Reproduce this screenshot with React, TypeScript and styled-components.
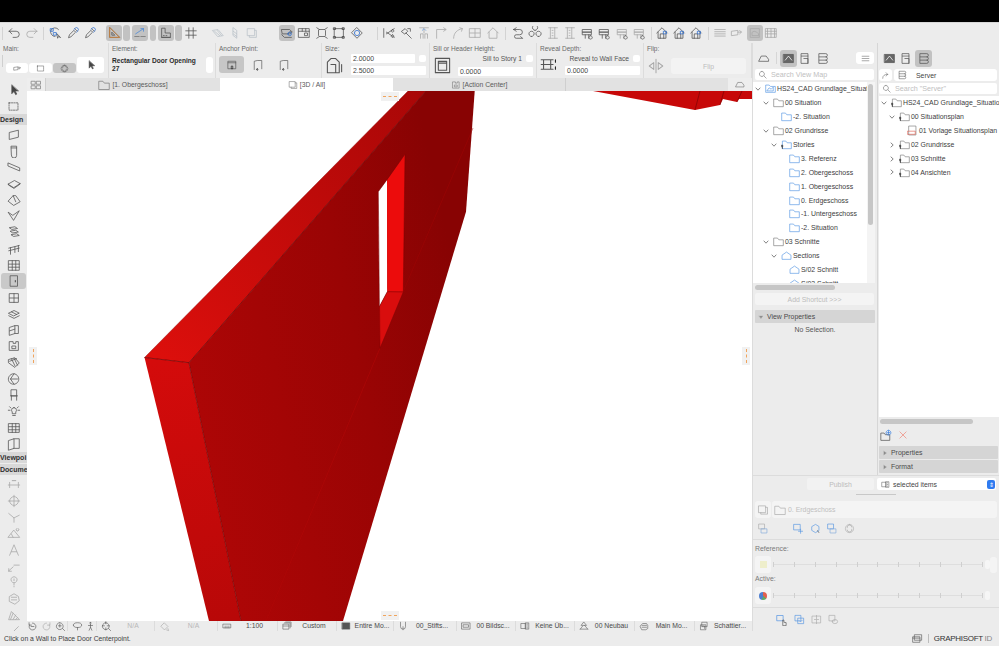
import * as React from "react";
import styled, { createGlobalStyle } from "styled-components";

const GlobalStyle = createGlobalStyle`
  html, body { margin: 0; padding: 0; background: #ececec; }
  body { font-family: "Liberation Sans", Arial, sans-serif; color: #3a3a3a; }
  * { box-sizing: border-box; }
`;

type GlyphDef = { d: string; fill?: string; accent?: string; accentColor?: string; dash?: boolean };

const GLYPHS: Record<string, GlyphDef> = {
  undo: { d: "M2.5 6h8a3.5 3.5 0 0 1 0 7H7M2.5 6l3-3M2.5 6l3 3" },
  redo: { d: "M13.5 6h-8a3.5 3.5 0 0 0 0 7H9M13.5 6l-3-3M13.5 6l-3 3" },
  favorite: { d: "M10 9l1 5 1-2 2 1zM8 12a5 5 0 1 1 4-8", accent: "M3 3h3v3H3zM6.5 7.5h3v3h-3z", accentColor: "#2f6fd0" },
  dropper: { d: "M10 3l3 3M3 13l1-3 5-5 2 2-5 5z", accent: "M9 4l1.5-1.5a1.5 1.5 0 0 1 3 3L12 7", accentColor: "#2f6fd0" },
  ruler: { d: "M3 2v11h11zM5.5 7.5v3h3z", accent: "M3 2v11h11z", accentColor: "#d98536" },
  guide: { d: "M2 12h5M9 12h5", accent: "M3 9l9-6M9 3l3 0 0 3", accentColor: "#4c8ad8" },
  snap: { d: "M3 3v10h10v-5H7V3zM5 11h1M8 11h1", accent: "M3 13h10", accentColor: "#555" },
  hash: { d: "M5.5 2v12M10.5 2v12M2 5.5h12M2 10.5h12" },
  plane: { d: "M2 5l6-1 6 7-6 1z M4 6l6 5M7 5l5 6" },
  sliver: { d: "M6 2l4 3v9l-4-3zM6 6l4 3M6 9l4 3" },
  square: { d: "M3 3h8v8H3zM5 11v2h8V5h-2" },
  layers: { d: "M2 4h9l3 3-3 2H3zM2 10l3 3h8M9 9l3-3", accent: "M9 9a2 2 0 1 1 4 0a2 2 0 1 1-4 0", accentColor: "#2f6fd0" },
  scale: { d: "M2 3h12v10H2zM2 6h12M6 3v3M10 3v3M9 8h3v3H9z" },
  focus: { d: "M5 4h6l1 1v6l-1 1H5l-1-1V5zM2 2l3 2M14 2l-3 2M2 14l3-2M14 14l-3-2" },
  points: { d: "M3 3h10v10H3z", accent: "M2 2h2v2H2zM12 2h2v2h-2zM2 12h2v2H2zM12 12h2v2h-2z", accentColor: "#444" },
  diamond: { d: "M8 2l6 6-6 6-6-6z", accent: "M5 8a3 3 0 1 0 6 0a3 3 0 1 0-6 0", accentColor: "#2f6fd0" },
  scissors: { d: "M2 3v10M14 3L5 9M14 13L5 7M12 4a1.5 1.5 0 1 0 .1 0M12 10a1.5 1.5 0 1 0 .1 0" },
  hammer: { d: "M3 6l4-3 3 3-3 3zM8 8l6 6M10 3h3v3" },
  extend: { d: "M3 2h10M8 3v5M4 14V9h3v5M9 14V9h3v5", accent: "M6 5l2-2 2 2", accentColor: "#6b9ddb" },
  corner: { d: "M3 14V4h10M11 2l3 2-3 2" },
  arc: { d: "M3 14C3 8 7 4 13 3M10 2l3 1-1 3" },
  grid2: { d: "M2 3h12v10H2zM8 3v10M2 8h12" },
  house: { d: "M2 8l6-6 6 6M3.5 7v7h9V7" },
  merge: { d: "M3 4h7a3 3 0 0 1 0 6H6a2 2 0 0 0 0 4h7M3 4l3-2M3 4l3 2M13 14l-2-2" },
  cluster: { d: "M8 5a3 3 0 1 1 .1 0M4 12a3 3 0 1 1 .1 0M12 12a3 3 0 1 1 .1 0" },
  column2: { d: "M3 2h10M3 14h10M5 2v12M10 2v12M7 5h1M7 8h1M7 11h1" },
  stackA: { d: "M3 4h10v3H3zM3 7h10v3H3zM6 10v4M10 10v4", accent: "M12 11a2 2 0 1 0 .1 0", accentColor: "#555" },
  houseA: { d: "M2 8l6-6 6 6M3.5 7v7h9V7M6 14V9h4v5", accent: "M10 6h3v3h-3z", accentColor: "#2f6fd0" },
  hatchA: { d: "M2 4h12M2 6.5h12M2 9h12M2 11.5h12" },
  hatchB: { d: "M2 6l7-1 0 5-7 1zM9 7h4M11 5l2 2-2 2" },
  hatchC: { d: "M3 3h10v10H3zM5 7l2-1 3 1 2 2v2H5z" },
  hatchD: { d: "M2 3h12v10H2zM2 6h12M2 9h12M4 3v10M8 3v10M12 3v10" },
  arrow: { d: "M5 1.5v11.5l3-3 2.2 4.2 1.6-.8-2.2-4 4-.2z", fill: "#444" },
  marquee: { d: "M2.5 3.5h11v9h-11z", dash: true },
  wall: { d: "M3 5l10-2.5v8L3 13z" },
  columnT: { d: "M5 2.5h6V13a3 3 0 0 1-6 0zM5 4.5h6" },
  beam: { d: "M1.5 3.5L14.5 9v3.5L1.5 7z" },
  slab: { d: "M1.5 8l7-4 6.5 3.5-7 4.5zM1.5 8v1l6.5 4 7-5V7.5" },
  roof: { d: "M1.5 9L7 3l3 0 5 7-7 4zM7 3l3 7" },
  shell: { d: "M1.5 4l6 9 6.5-11-7 5z" },
  stair: { d: "M3 3l6-1 3 2-6 1zM4 7l6-1 3 2-6 1zM5 11l6-1 3 2-6 1z" },
  railing: { d: "M2 7l12-3M2 10l12-3M4 6.5V14M9 5.5V12M13 4v7" },
  curtain: { d: "M2 3h12v11H2zM2 7h12M2 10.5h12M6 3v11M10 3v11" },
  door: { d: "M4 2h8v12H4z", accent: "M9.5 7.5v1.5", accentColor: "#222" },
  windowT: { d: "M3 3h10v10H3zM3 8h10M8 3v10" },
  skylight: { d: "M2 7l6-3 6 3-6 3zM2 10l6 3 6-3M5 5.5l6 3" },
  corner2: { d: "M3 5l6-2v9l-6 2zM9 3h4v9H9M3 9l6-2" },
  zone: { d: "M3 3h4v2h3V3h3v10H3zM6 8h4v3H6z" },
  mesh: { d: "M2 4l7-2 5 6-5 5-7-5zM5 3l4 8M8 2.5l4 8M3 6l8-3" },
  morph: { d: "M8 2a6 6 0 1 1-1 0zM8 2L4 8l4 6M4 8h8" },
  chair: { d: "M5 2h6v7H5zM4 9h8M5 9v5M11 9v5" },
  lamp: { d: "M8 3a3 3 0 0 1 2 5v2H6V8a3 3 0 0 1 2-5zM6.5 12h3M1.5 6h2M12.5 6h2M3 2l1.5 1.5M13 2l-1.5 1.5" },
  gridSolid: { d: "M2 3h12v10H2zM2 6.5h12M2 10h12M6 3v10M10 3v10" },
  tileGrid: { d: "M2 3h5v4H2zM9 3h5v4H9zM2 9h5v4H2zM9 9h5v4H9z" },
  bookOpen: { d: "M2 4l6-2v11l-6 2zM8 2h6v11H8" },
  dimLinear: { d: "M1.5 8h13M3 5v6M13 5v6", accent: "M6 3h4", accentColor: "#999" },
  dimTarget: { d: "M3 8a5 5 0 1 0 10 0a5 5 0 1 0-10 0M1.5 8h13M8 1.5v13" },
  dimCorner: { d: "M2 4l6 5v5M8 9l6-3" },
  angle: { d: "M1.5 13h13L8 5zM5 9l2 4", accent: "M11 3a1.5 1.5 0 1 0 2 0", accentColor: "#999" },
  letter: { d: "M3 14L8 2l5 12M5 10h6" },
  label: { d: "M1.5 14L7 9M2 11v3h3M8 7h6" },
  pin: { d: "M8 9a3.5 3.5 0 1 1 .1 0M8 4.5v2M8 10v1M8 12.5v1" },
  blob: { d: "M3 5l5-3 5 3 1 5-5 4-6-3zM5 6h6M5 9h6" },
  hatchT: { d: "M2 13l3-9 9 9zM4 13l3-7M7 13l3-5M10 13l2-2" },
  line: { d: "M3 13L13 3" },
  navZoom: { d: "M8 3a5 5 0 1 1-4.4 2.6M3 2.5v3.5h3.5M6 8h4" },
  navZoomR: { d: "M8 3a5 5 0 1 0 4.4 2.6M13 2.5v3.5H9.5" },
  navFit: { d: "M7 2.5a5 5 0 1 1-.1 0M7 5v4M5 7h4M11 11l3 3" },
  orbit: { d: "M2 6a6 3.5 0 1 1 12 0a6 3.5 0 1 1-12 0M8 9.5V13" },
  walk: { d: "M8 2a1 1 0 1 1-.1 0M8 4.5v4.5l-2 4.5M8 9l2 4.5M5 6.5h6" },
  wheel: { d: "M7 2.5a5 5 0 1 1-.1 0M7 1v3M7 10v3M2 7h3M9 7h3M11 11l3 3" },
  rotate: { d: "M8 3l5 5-5 5-5-5zM13 11l1 3-3-1" },
  scaleBar: { d: "M2 5h12v6H2zM5 8v3M8 8v3M11 8v3" },
  custom: { d: "M2 5h9v8H2zM4 3h9v8M6 1.5h8.5V9M2 8h9" },
  entire: { d: "M2 3h12v10H2z", fill: "#555" },
  pen: { d: "M4 2v7a4 4 0 0 0 8 0V2M8 9v5" },
  screen: { d: "M1.5 3h13v10h-13zM4 6h8v4H4z" },
  overlay: { d: "M2 4h7v8H2zM9 3h5v10H9zM11 5h1M11 8h1M11 11h1" },
  renov: { d: "M8 2l4 5H4zM2 13l4-5M14 13L9 7M2 13h12" },
  model: { d: "M2 8l4-4h6l2 3v5l-3 2H5zM5 7h7M5 10h7" },
  shade: { d: "M5 2h8v7H5zM3 6h8v8H3zM5 8h4v4" },
  map: { d: "M2 8l6-5 6 5v5H2z" },
  viewMap: { d: "M2 3h12v10H2z", fill: "#666", accent: "M4 10l4-5 4 5", accentColor: "#fff" },
  layoutBook: { d: "M3 2h8v12H3zM3 5h8M6 8h5v6" },
  drawings: { d: "M4 2h8a2 2 0 0 1 0 4a2 2 0 0 1 0 4a2 2 0 0 1 0 4H4zM4 6h8M4 10h8" },
  burger: { d: "M2 4h12M2 8h12M2 12h12" },
  search: { d: "M7 2.5a4.5 4.5 0 1 1-.1 0M10.5 10.5L14.5 14.5" },
  back: { d: "M3 13c0-5 3-7 9-7M9 3l3 3-3 3" },
  folder: { d: "M1 13.5V3h5.5l2 2.5H15v8z" },
  folderSection: { d: "M1.5 13V7.5L8 3l6.5 4.5V13z" },
  pinFolder: { d: "M2 13.5V3h5l2 2.5h6v8z", accent: "M1.5 9a1.3 1.3 0 1 0 .1 0M2 11v3", accentColor: "#222" },
  project: { d: "M1 13V3h5l2 2h7v8z", accent: "M3 11l3-4 3 2 3-3v5z", accentColor: "#4a8fe0" },
  pdf: { d: "M3 1.5h10v13H3z", accent: "M1 9h11v4.5H1z", accentColor: "#e05b4b" },
  newFolder: { d: "M1 13.5V5h4l1.5 2H12v6.5z", accent: "M10.5 1.5a3 3 0 1 1-.1 0M10.5 3v3M9 4.5h3", accentColor: "#3a7fe0" },
  close: { d: "M3 3l10 10M13 3L3 13" },
  triangle: { d: "M5 3l7 5-7 5z", fill: "#8b8b8b" },
  triangleDown: { d: "M3 5h10l-5 7z", fill: "#8b8b8b" },
  sheets: { d: "M2.5 2.5h9v9h-9zM5 11.5v2h9v-9h-2.5" },
  outlineSelect: { d: "M1.5 1.5h8v7h-8z", accent: "M5 8.5h8v6H5z", accentColor: "#7da8dc" },
  moveSel: { d: "M1.5 2h9v8h-9zM11 9v6M8 12h6" },
  rotateSel: { d: "M3 5l5-3 5 3v6l-5 3-5-3z", accent: "M11 11l2 3", accentColor: "#555" },
  sync: { d: "M8 2a6 6 0 1 1-.1 0M4.5 7a3.5 3.5 0 0 1 7-1M11.5 9a3.5 3.5 0 0 1-7 1" },
  handSel: { d: "M1.5 2h8v7h-8z", accent: "M9 15V8h1.5v3l3 .5V15z", accentColor: "#555" },
  check2: { d: "M2 2h8v8H2zM6 6h8v8H6zM8 10l1.5 1.5L12 9" },
  splitSel: { d: "M2 3h12v10H2zM8 2v12M5 8h2M9 8h2" },
  eyeSel: { d: "M2 2h8v8H2zM6 11a4 3 0 0 1 8 0a4 3 0 0 1-8 0" },
  windowStack: { d: "M4 2.5h10v8H4zM1.5 5.5h10v8h-10zM1.5 7.5h10" },
  opening: { d: "M2 2h12v12H2zM4.5 4.5h7V12h-7zM4.5 6h7" },
  doorMark: { d: "M3 3h10v10H3zM3 5h10", accent: "M7 10v3h2v-3z", accentColor: "#222" },
  doorUp: { d: "M3 14V3l4-1h6v11", accent: "M7 13a1 1 0 1 0 .1 0", accentColor: "#222" },
  sizeDoor: { d: "M2 6l3-3h4l3 3v9H2zM5 8h4v7M14 8v6" },
  reveal: { d: "M1 4h10M1 12h10M3 4v8M9 4v8M1 8h10", accent: "M13 4v2M13 10v2", accentColor: "#222" },
  flipT: { d: "M2 8l4-3v6zM14 8l-4-3v6zM8 2v12" },
  mapSmall: { d: "M1 11l3-6h6l3 4v2z" },
};

const TONES: Record<string, string> = {
  dark: "#555555",
  mid: "#747474",
  faded: "#bcc3ca",
  light: "#a8a8a8",
  blue: "#4d90e2",
  red: "#ef6b5a",
};

const Svg = styled.svg<{ $size: number; $tone: string }>`
  color: ${(p) => TONES[p.$tone]};
  display: block;
  fill: none;
  flex: none;
  height: ${(p) => p.$size}px;
  stroke: currentColor;
  stroke-linecap: round;
  stroke-linejoin: round;
  stroke-width: 0.9;
  width: ${(p) => p.$size}px;
`;

const Glyph = ({ name, size = 14, tone = "dark" }: { name: string; size?: number; tone?: string }) => {
  const def = GLYPHS[name];
  return (
    <Svg viewBox="0 0 16 16" $size={size} $tone={tone}>
      <path d={def.d} fill={def.fill || "none"} strokeDasharray={def.dash ? "1.6 1.4" : undefined} />
      {def.accent && <path d={def.accent} stroke={def.accentColor} />}
    </Svg>
  );
};

const Page = styled.div`
  background: #ececec;
  display: flex;
  flex-direction: column;
  height: 646px;
  overflow: hidden;
  width: 999px;
`;

const BlackBar = styled.div`
  background: #000;
  flex: none;
  height: 22px;
`;

const Toolbar = styled.div`
  align-items: center;
  border-top: 1px solid #d8d8d8;
  display: flex;
  flex: none;
  height: 21px;
  padding-left: 2px;
`;

const ToolCell = styled.div<{ $gap: number; $width: number; $active?: boolean }>`
  align-items: center;
  background: ${(p) => (p.$active ? "#c2c2c2" : "transparent")};
  border-radius: 3px;
  display: flex;
  flex: none;
  height: 16px;
  justify-content: center;
  margin-left: ${(p) => p.$gap}px;
  width: ${(p) => p.$width}px;
`;

const ToolSep = styled.div<{ $gap: number }>`
  background: #d3d3d3;
  flex: none;
  height: 13px;
  margin-left: ${(p) => p.$gap}px;
  width: 1px;
`;

type ToolItem = { g?: string; gap: number; w?: number; active?: boolean; tone?: string; sep?: boolean };

const TOOLS: ToolItem[] = [
  { sep: true, gap: 0 },
  { g: "undo", gap: 2.5 },
  { g: "redo", gap: 1, tone: "light" },
  { sep: true, gap: 2.5 },
  { g: "favorite", gap: 2.5 },
  { g: "dropper", gap: 1 },
  { g: "dropper", gap: 0 },
  { g: "ruler", gap: 7.5, w: 16, active: true },
  { gap: 1, w: 7, active: true },
  { g: "guide", gap: 2, w: 16, active: true, tone: "mid" },
  { gap: 2, w: 6, active: true },
  { g: "snap", gap: 2, w: 16, active: true },
  { gap: 1, w: 7, active: true },
  { g: "hash", gap: 0.5 },
  { g: "plane", gap: 10, tone: "faded" },
  { g: "sliver", gap: 0, tone: "faded" },
  { g: "square", gap: 0, tone: "faded" },
  { g: "layers", gap: 18.5, w: 16, active: true },
  { g: "scale", gap: 0.5 },
  { g: "focus", gap: 1 },
  { g: "points", gap: 0 },
  { g: "diamond", gap: 1 },
  { sep: true, gap: 11.5 },
  { g: "scissors", gap: 2.5 },
  { g: "hammer", gap: 0 },
  { g: "extend", gap: 1, tone: "light" },
  { g: "corner", gap: 0, tone: "light" },
  { g: "arc", gap: 0, tone: "light" },
  { g: "grid2", gap: 0, tone: "light" },
  { g: "house", gap: 1, tone: "light" },
  { sep: true, gap: 3.5 },
  { g: "merge", gap: 3.5 },
  { g: "cluster", gap: 0.3 },
  { g: "column2", gap: 0.3, tone: "light" },
  { g: "column2", gap: 0.3, tone: "light" },
  { g: "stackA", gap: 0.3 },
  { g: "stackA", gap: 0.3 },
  { g: "stackA", gap: 0.3, tone: "light" },
  { g: "stackA", gap: 0.3, tone: "light" },
  { sep: true, gap: 3.4 },
  { g: "houseA", gap: 1.5 },
  { g: "houseA", gap: 0 },
  { g: "houseA", gap: 0 },
  { sep: true, gap: 3.5 },
  { g: "hatchA", gap: 2.5, tone: "light" },
  { g: "hatchB", gap: 0, tone: "light" },
  { g: "hatchC", gap: 1.5, w: 16, active: true, tone: "light" },
  { g: "hatchD", gap: 0, tone: "light" },
];

const Body = styled.div`
  display: flex;
  flex: 1;
  min-height: 0;
`;

const WorkArea = styled.div`
  display: flex;
  flex: none;
  flex-direction: column;
  width: 752px;
`;

const InfoBox = styled.div`
  display: flex;
  flex: none;
  height: 35px;
`;

const InfoSection = styled.div<{ $width: number }>`
  border-right: 1px solid #dcdcdc;
  flex: none;
  padding: 1px 0 0 3px;
  width: ${(p) => p.$width}px;
`;

const InfoLabel = styled.div`
  color: #6a6a6a;
  font-size: 6.5px;
  height: 10px;
  line-height: 10px;
  white-space: nowrap;
`;

const InfoRow = styled.div<{ $gap?: number; $top?: number; $end?: boolean }>`
  align-items: ${(p) => (p.$end ? "flex-end" : "center")};
  display: flex;
  gap: ${(p) => p.$gap ?? 0}px;
  margin-top: ${(p) => p.$top ?? 0}px;
`;

const MainGrip = styled.div`
  align-self: flex-start;
  background: #cfcfcf;
  flex: none;
  height: 12px;
  margin: -2px 2px 0 -1px;
  width: 1px;
`;

const MiniButton = styled.div<{ $width: number; $height?: number; $active?: boolean }>`
  align-items: center;
  background: ${(p) => (p.$active ? "#c4c4c4" : "#fff")};
  border-radius: 3px;
  display: flex;
  flex: none;
  height: ${(p) => p.$height ?? 10}px;
  justify-content: center;
  width: ${(p) => p.$width}px;
`;

const ElementName = styled.div`
  color: #2c2c2c;
  font-size: 6.6px;
  font-weight: 700;
  line-height: 8px;
  white-space: nowrap;
  width: 94px;
`;

const AnchorButton = styled.div<{ $active?: boolean }>`
  align-items: center;
  background: ${(p) => (p.$active ? "#c6c6c6" : "transparent")};
  border-radius: 3px;
  display: flex;
  flex: none;
  height: 17px;
  justify-content: center;
  width: 25px;
`;

const Field = styled.div<{ $width: number }>`
  background: #fff;
  border-radius: 1px;
  color: #444;
  flex: none;
  font-size: 6.9px;
  height: 9px;
  line-height: 9px;
  padding-left: 2px;
  width: ${(p) => p.$width}px;
`;

const Check = styled.div`
  background: #fff;
  border-radius: 2px;
  flex: none;
  height: 7px;
  width: 7px;
`;

const StackCol = styled.div<{ $gap?: number }>`
  display: flex;
  flex: none;
  flex-direction: column;
  gap: ${(p) => p.$gap ?? 3}px;
`;

const RightLine = styled.div`
  align-items: center;
  color: #555;
  display: flex;
  font-size: 6.7px;
  gap: 4px;
  height: 8px;
  justify-content: flex-end;
  white-space: nowrap;
`;

const FlipButton = styled.div`
  align-items: center;
  background: #f3f3f3;
  border-radius: 3px;
  color: #bdbdbd;
  display: flex;
  font-size: 6.9px;
  height: 16px;
  justify-content: center;
  width: 75px;
`;

const Workspace = styled.div`
  display: flex;
  flex: 1;
  min-height: 0;
`;

const Toolbox = styled.div`
  display: flex;
  flex: none;
  flex-direction: column;
  overflow: hidden;
  padding-top: 3.9px;
  width: 27px;
`;

const ToolboxCell = styled.div<{ $active?: boolean }>`
  align-items: center;
  background: ${(p) => (p.$active ? "#c9c9c9" : "transparent")};
  border-radius: 3px;
  display: flex;
  flex: none;
  height: 16.3px;
  justify-content: center;
  margin: 0 1px;
`;

const ToolboxHeader = styled.div`
  background: #d8d8d8;
  color: #2f2f2f;
  flex: none;
  font-size: 7px;
  font-weight: 700;
  height: 11px;
  line-height: 11px;
  margin: 0 0 1px;
  overflow: hidden;
  white-space: nowrap;
`;

const CanvasColumn = styled.div`
  display: flex;
  flex: 1;
  flex-direction: column;
  min-width: 0;
`;

const TabBar = styled.div`
  display: flex;
  flex: none;
  height: 13px;
`;

const Tab = styled.div<{ $width: number; $tone: string; $divider?: boolean }>`
  align-items: center;
  background: ${(p) => p.$tone};
  border-right: ${(p) => (p.$divider ? "1px solid #cfcfcf" : "0")};
  color: #5a5a5a;
  display: flex;
  flex: none;
  font-size: 6.8px;
  gap: 2px;
  justify-content: center;
  width: ${(p) => p.$width}px;
`;

const Canvas = styled.div`
  background: #fff;
  flex: 1;
  min-height: 0;
  overflow: hidden;
  position: relative;
`;

const CanvasDrawing = styled.svg`
  display: block;
  height: 100%;
  width: 100%;
`;

const Grip = styled.div<{ $side: "top" | "bottom" | "left" | "right" }>`
  align-items: center;
  background: #f1f1f1;
  display: flex;
  justify-content: center;
  position: absolute;
  ${(p) =>
    p.$side === "top" || p.$side === "bottom"
      ? `height: 9px; left: 354px; width: 18px; ${p.$side}: 1px;`
      : `height: 18px; top: 256px; width: 8px; ${p.$side}: 2px;`}
`;

const GripDash = styled.div<{ $vertical: boolean }>`
  border-top: ${(p) => (p.$vertical ? "0" : "1px dashed #f0a45d")};
  border-left: ${(p) => (p.$vertical ? "1px dashed #f0a45d" : "0")};
  height: ${(p) => (p.$vertical ? "14px" : "0")};
  width: ${(p) => (p.$vertical ? "0" : "14px")};
`;

const NavBar = styled.div`
  display: flex;
  flex: none;
  height: 10px;
`;

const NavSegment = styled.div<{ $width: number; $last?: boolean; $pad?: number; $gap?: number }>`
  align-items: center;
  border-right: ${(p) => (p.$last ? "0" : "1px solid #dcdcdc")};
  display: flex;
  flex: none;
  gap: ${(p) => p.$gap ?? 0}px;
  padding-left: ${(p) => p.$pad ?? 4}px;
  width: ${(p) => p.$width}px;
`;

const NavText = styled.span<{ $muted?: boolean }>`
  color: ${(p) => (p.$muted ? "#b8b8b8" : "#4a4a4a")};
  flex: 1;
  font-size: 6.8px;
  line-height: 10px;
  text-align: center;
  white-space: nowrap;
`;

const SidePanels = styled.div`
  border-left: 1px solid #dcdcdc;
  display: flex;
  flex: none;
  flex-direction: column;
  width: 247px;
`;

const Columns = styled.div`
  border-bottom: 1px solid #dcdcdc;
  display: flex;
  flex: none;
  height: 433px;
`;

const NavigatorPanel = styled.div`
  border-right: 1px solid #d6d6d6;
  display: flex;
  flex: none;
  flex-direction: column;
  width: 125px;
`;

const OrganizerPanel = styled.div`
  display: flex;
  flex: 1;
  flex-direction: column;
  min-width: 0;
`;

const IconRow = styled.div`
  align-items: center;
  display: flex;
  flex: none;
  height: 26px;
  padding: 4px 3px 0 3px;
`;

const ModeButton = styled.div<{ $active?: boolean }>`
  align-items: center;
  background: ${(p) => (p.$active ? "#c2c2c2" : "transparent")};
  border-radius: 3px;
  display: flex;
  flex: none;
  height: 17px;
  justify-content: center;
  width: 17px;
`;

const RowSep = styled.div`
  background: #d6d6d6;
  flex: none;
  height: 12px;
  margin: 0 3px;
  width: 1px;
`;

const BurgerButton = styled.div`
  align-items: center;
  background: #fff;
  border-radius: 3px;
  display: flex;
  height: 12px;
  justify-content: center;
  margin-left: auto;
  width: 18px;
`;

const SearchField = styled.div<{ $margin: string }>`
  align-items: center;
  background: #fff;
  border-radius: 2px;
  color: #c0c0c0;
  display: flex;
  flex: none;
  font-size: 7.2px;
  gap: 4px;
  height: 11px;
  margin: ${(p) => p.$margin};
  padding-left: 3px;
  white-space: nowrap;
`;

const TreeFrame = styled.div<{ $height: number; $margin: string }>`
  display: flex;
  flex: none;
  height: ${(p) => p.$height}px;
  margin: ${(p) => p.$margin};
`;

const Tree = styled.div`
  background: #fff;
  flex: 1;
  min-width: 0;
  overflow: hidden;
`;

const TreeRowBox = styled.div<{ $depth: number }>`
  align-items: center;
  color: #3d3d3d;
  display: flex;
  font-size: 6.9px;
  height: 13.9px;
  padding-left: ${(p) => 1 + p.$depth * 8}px;
  white-space: nowrap;
`;

const Chevron = styled.div`
  align-items: center;
  display: flex;
  flex: none;
  justify-content: center;
  margin-right: 3px;
  width: 8px;
`;

const TreeLabel = styled.span`
  margin-left: 1px;
`;

const ScrollGutter = styled.div`
  background: #f4f4f4;
  flex: none;
  padding: 2px 1px 0;
  width: 8px;
`;

const ScrollThumbV = styled.div`
  background: #c6c6c6;
  border-radius: 3px;
  height: 141px;
  width: 5px;
`;

const ScrollTrackH = styled.div<{ $margin: string }>`
  flex: none;
  height: 5px;
  margin: ${(p) => p.$margin};
`;

const ScrollThumbH = styled.div<{ $width: number }>`
  background: #c6c6c6;
  border-radius: 3px;
  height: 5px;
  width: ${(p) => p.$width}px;
`;

const WideButton = styled.div`
  align-items: center;
  background: #f4f4f4;
  border-radius: 2px;
  color: #bcbcbc;
  display: flex;
  flex: none;
  font-size: 6.9px;
  height: 12px;
  justify-content: center;
  margin: 3px 3px 0 2px;
`;

const SectionHeader = styled.div<{ $margin: string }>`
  align-items: center;
  background: #d5d5d5;
  border-radius: 1px;
  color: #4a4a4a;
  display: flex;
  flex: none;
  font-size: 6.9px;
  gap: 3px;
  height: 13px;
  margin: ${(p) => p.$margin};
  padding-left: 3px;
`;

const NoSelection = styled.div`
  color: #555;
  flex: none;
  font-size: 6.9px;
  margin-top: 3px;
  text-align: center;
`;

const ServerSelect = styled.div`
  align-items: center;
  background: #fff;
  border-radius: 3px;
  color: #444;
  display: flex;
  flex: 1;
  font-size: 6.9px;
  gap: 9px;
  height: 12px;
  padding-left: 3px;
`;

const ServerRow = styled.div`
  align-items: center;
  display: flex;
  flex: none;
  gap: 2px;
  height: 14px;
  margin: -1px 2px 0 1px;
`;

const BackButton = styled.div`
  align-items: center;
  background: #fff;
  border-radius: 3px;
  display: flex;
  flex: none;
  height: 12px;
  justify-content: center;
  width: 13px;
`;

const ActionIcons = styled.div`
  align-items: center;
  display: flex;
  flex: none;
  gap: 5px;
  height: 22px;
  padding-left: 2px;
`;

const PublishRow = styled.div`
  align-items: center;
  display: flex;
  flex: none;
  gap: 3px;
  height: 16px;
  padding-left: 54px;
`;

const PublishButton = styled.div`
  align-items: center;
  background: #f2f2f2;
  border-radius: 2px;
  color: #bcbcbc;
  display: flex;
  flex: none;
  font-size: 6.9px;
  height: 12px;
  justify-content: center;
  width: 67px;
`;

const ItemsSelect = styled.div`
  align-items: center;
  background: #fff;
  border-radius: 2px;
  color: #444;
  display: flex;
  flex: none;
  font-size: 6.9px;
  gap: 3px;
  height: 12px;
  padding-left: 4px;
  width: 119px;
`;

const Stepper = styled.div`
  align-items: center;
  background: #2f7bf0;
  border-radius: 2px;
  color: #fff;
  display: flex;
  font-size: 6px;
  height: 9px;
  justify-content: center;
  margin-left: auto;
  margin-right: 1px;
  width: 8px;
`;

const PanelGrip = styled.div`
  background: #c8c8c8;
  flex: none;
  height: 1px;
  margin: 2px auto 0;
  width: 40px;
`;

const OverrideRow = styled.div`
  display: flex;
  flex: none;
  gap: 1px;
  height: 17px;
  margin: 6px 2px 0 2px;
`;

const FieldBox = styled.div`
  align-items: center;
  background: #f4f4f4;
  border-radius: 3px;
  color: #c0c0c0;
  display: flex;
  flex: 1;
  font-size: 6.9px;
  gap: 2px;
  padding-left: 2px;
`;

const SquareButton = styled.div`
  align-items: center;
  background: #f4f4f4;
  border-radius: 3px;
  display: flex;
  flex: none;
  height: 17px;
  justify-content: center;
  width: 16px;
`;

const IconStrip = styled.div<{ $height: number; $pad: number; $border?: "top" | "bottom" }>`
  align-items: center;
  border-${(p) => p.$border ?? "bottom"}: ${(p) => (p.$border ? "1px solid #dcdcdc" : "0")};
  display: flex;
  flex: none;
  height: ${(p) => p.$height}px;
  padding-left: ${(p) => p.$pad}px;
`;

const StripIcon = styled.div<{ $gap: number }>`
  display: flex;
  flex: none;
  margin-left: ${(p) => p.$gap}px;
`;

const TransLabel = styled.div<{ $top: number }>`
  color: #7a7a7a;
  flex: none;
  font-size: 6.9px;
  height: 10px;
  line-height: 10px;
  margin: ${(p) => p.$top}px 0 0 2px;
`;

const SliderRow = styled.div<{ $top: number; $bottom?: number }>`
  align-items: center;
  display: flex;
  flex: none;
  gap: 2px;
  height: 17px;
  margin: ${(p) => p.$top}px 2px ${(p) => p.$bottom ?? 0}px 2px;
`;

const SliderTrack = styled.div`
  align-items: center;
  background: #dedede;
  display: flex;
  flex: none;
  height: 1px;
  justify-content: space-between;
  width: 210px;
`;

const SliderTick = styled.div`
  background: #cfcfcf;
  flex: none;
  height: 5px;
  width: 1px;
`;

const SliderKnob = styled.div`
  background: #f6f6f6;
  border-radius: 2px;
  flex: none;
  height: 9px;
  width: 5px;
`;

const EndCap = styled.div`
  background: #f4f4f4;
  border-radius: 3px;
  flex: none;
  height: 16px;
  margin-left: -2px;
  width: 7px;
`;

const Swatch = styled.div`
  background: #eeeecb;
  height: 7px;
  width: 7px;
`;

const Pie = styled.div`
  background: conic-gradient(#e0604f 0 35%, #62a868 35% 55%, #4d7fd0 55% 100%);
  border-radius: 50%;
  height: 8px;
  width: 8px;
`;

const StatusBar = styled.div`
  align-items: center;
  display: flex;
  flex: none;
  height: 15px;
  justify-content: space-between;
  padding: 0 7px 0 4px;
`;

const StatusText = styled.span`
  color: #3d3d3d;
  font-size: 6.8px;
  white-space: nowrap;
`;

const Brand = styled.div`
  align-items: center;
  display: flex;
  gap: 5px;
`;

const BrandDivider = styled.div`
  background: #bcbcbc;
  height: 9px;
  width: 1px;
`;

const BrandName = styled.span`
  color: #333;
  font-size: 8px;
  letter-spacing: -0.3px;
  white-space: nowrap;
`;

const BrandId = styled.span`
  color: #8a8a8a;
`;

const TreeRow = ({
  depth,
  open,
  icon,
  tone,
  label,
}: {
  depth: number;
  open?: boolean | null;
  icon: string;
  tone?: string;
  label: string;
}) => (
  <TreeRowBox $depth={depth}>
    <Chevron>
      {open === true && (
        <svg width="6" height="4" viewBox="0 0 6 4" fill="none" stroke="#777" strokeWidth="0.9">
          <path d="M.7.7L3 3.2 5.3.7" />
        </svg>
      )}
      {open === false && (
        <svg width="4" height="6" viewBox="0 0 4 6" fill="none" stroke="#777" strokeWidth="0.9">
          <path d="M.7.7L3.2 3 .7 5.3" />
        </svg>
      )}
    </Chevron>
    <Glyph name={icon} size={11} tone={tone || "mid"} />
    <TreeLabel>{label}</TreeLabel>
  </TreeRowBox>
);

const LEFT_TOOLS_A = ["wall", "columnT", "beam", "slab", "roof", "shell", "stair", "railing", "curtain", "door", "windowT", "skylight", "corner2", "zone", "mesh", "morph", "chair", "lamp", "gridSolid", "bookOpen"];
const LEFT_TOOLS_B = ["dimLinear", "dimTarget", "dimCorner", "angle", "letter", "label", "pin", "blob", "hatchT", "line"];

const NAV_SEGMENTS = [
  { w: 60, icon: "scaleBar", text: "1:100" },
  { w: 59, icon: "custom", text: "Custom" },
  { w: 57, icon: "entire", text: "Entire Mo..." },
  { w: 63, icon: "pen", text: "00_Stifts..." },
  { w: 59, icon: "screen", text: "00 Bildsc..." },
  { w: 59, icon: "overlay", text: "Keine Üb..." },
  { w: 60, icon: "renov", text: "00 Neubau" },
  { w: 60, icon: "model", text: "Main Mo..." },
];

const TICKS = Array.from({ length: 11 }, (_, i) => i);

const WallDrawing = () => (
  <CanvasDrawing viewBox="27 91 725 530" preserveAspectRatio="none">
    <defs>
      <linearGradient id="wallFace" gradientUnits="userSpaceOnUse" x1="190" y1="400" x2="470" y2="340">
        <stop offset="0" stopColor="#ad0606" />
        <stop offset="0.6" stopColor="#9a0404" />
        <stop offset="1" stopColor="#880303" />
      </linearGradient>
      <linearGradient id="wallTop" gradientUnits="userSpaceOnUse" x1="160" y1="360" x2="420" y2="91">
        <stop offset="0" stopColor="#dc0f0c" />
        <stop offset="1" stopColor="#a90707" />
      </linearGradient>
      <linearGradient id="wallEnd" gradientUnits="userSpaceOnUse" x1="160" y1="360" x2="225" y2="621">
        <stop offset="0" stopColor="#d40b0b" />
        <stop offset="1" stopColor="#b80808" />
      </linearGradient>
    </defs>
    <polygon points="593,91 695,110 720,105 723,99 737,102 739,99 752,99 752,91" fill="#c70808" />
    <path d="M700 91L695 110M724 91L720 105M742 91L737 102" stroke="#7d0404" strokeWidth="0.7" fill="none" />
    <polygon points="144.5,357.5 408,91 426,91 189,362.7" fill="url(#wallTop)" stroke="#8a0606" strokeWidth="0.4" />
    <polygon points="144.5,357.5 189,362.7 241,621 209,621" fill="url(#wallEnd)" />
    <polygon points="189,362.7 426,91 474.7,91 466,211.7 343,621 241,621" fill="url(#wallFace)" />
    <path d="M144.5 357.5L189 362.7L241 621M189 362.7L426 91" stroke="#6e0303" strokeWidth="0.7" fill="none" />
    <path d="M266 621L380 348" stroke="#b00808" strokeWidth="0.6" fill="none" />
    <path d="M403 292L473 128" stroke="#a00606" strokeWidth="0.5" fill="none" />
    <polygon points="378.3,191.7 387,180 387.3,291.7 379.3,306.7" fill="#ffffff" />
    <polygon points="387,180 405,154.3 403.3,291.7 387.3,291.7" fill="#ec0c0c" />
    <polygon points="379.3,306.7 387.3,291.7 403.3,292 380,348.3" fill="#d90d0d" />
    <path d="M378.3 191.7L405 154.3L403.3 292L380 348.3ZM379.3 306.7L387.3 291.7L403.3 292" stroke="#7a0404" strokeWidth="0.5" fill="none" />
  </CanvasDrawing>
);

const App = () => (
  <Page>
    <GlobalStyle />
    <BlackBar />
    <Toolbar>
      {TOOLS.map((t, i) =>
        t.sep ? (
          <ToolSep key={i} $gap={t.gap} />
        ) : (
          <ToolCell key={i} $gap={t.gap} $width={t.w ?? 17} $active={t.active}>
            {t.g && <Glyph name={t.g} size={14} tone={t.tone || "dark"} />}
          </ToolCell>
        ),
      )}
    </Toolbar>
    <Body>
      <WorkArea>
        <InfoBox>
          <InfoSection $width={109}>
            <InfoLabel>Main:</InfoLabel>
            <InfoRow $gap={1} $top={3} $end>
              <MainGrip />
              <MiniButton $width={22} $height={10}>
                <Glyph name="hatchB" size={9} />
              </MiniButton>
              <MiniButton $width={23} $height={10}>
                <Glyph name="marquee" size={9} />
              </MiniButton>
              <MiniButton $width={23} $height={10} $active>
                <Glyph name="sync" size={9} />
              </MiniButton>
              <MiniButton $width={27} $height={16}>
                <Glyph name="arrow" size={10} />
              </MiniButton>
            </InfoRow>
          </InfoSection>
          <InfoSection $width={107}>
            <InfoLabel>Element:</InfoLabel>
            <InfoRow $top={3}>
              <ElementName>
                Rectangular Door Opening
                <br />
                27
              </ElementName>
              <MiniButton $width={7} $height={16} />
            </InfoRow>
          </InfoSection>
          <InfoSection $width={106}>
            <InfoLabel>Anchor Point:</InfoLabel>
            <InfoRow $gap={1} $top={2}>
              <AnchorButton $active>
                <Glyph name="doorMark" size={12} />
              </AnchorButton>
              <AnchorButton>
                <Glyph name="doorUp" size={12} />
              </AnchorButton>
              <AnchorButton>
                <Glyph name="doorUp" size={12} />
              </AnchorButton>
            </InfoRow>
          </InfoSection>
          <InfoSection $width={108}>
            <InfoLabel>Size:</InfoLabel>
            <InfoRow $gap={7}>
              <Glyph name="sizeDoor" size={19} />
              <StackCol>
                <InfoRow $gap={4}>
                  <Field $width={64}>2.0000</Field>
                  <Check />
                </InfoRow>
                <Field $width={75}>2.5000</Field>
              </StackCol>
            </InfoRow>
          </InfoSection>
          <InfoSection $width={107}>
            <InfoLabel>Sill or Header Height:</InfoLabel>
            <InfoRow $gap={6}>
              <Glyph name="opening" size={19} />
              <StackCol $gap={5}>
                <RightLine>
                  Sill to Story 1
                  <Check />
                </RightLine>
                <Field $width={75}>0.0000</Field>
              </StackCol>
            </InfoRow>
          </InfoSection>
          <InfoSection $width={107}>
            <InfoLabel>Reveal Depth:</InfoLabel>
            <InfoRow $gap={6}>
              <Glyph name="reveal" size={19} />
              <StackCol $gap={4}>
                <RightLine>
                  Reveal to Wall Face
                  <Check />
                </RightLine>
                <Field $width={75}>0.0000</Field>
              </StackCol>
            </InfoRow>
          </InfoSection>
          <InfoSection $width={108}>
            <InfoLabel>Flip:</InfoLabel>
            <InfoRow $gap={6} $top={3}>
              <Glyph name="flipT" size={18} tone="light" />
              <FlipButton>Flip</FlipButton>
            </InfoRow>
          </InfoSection>
        </InfoBox>
        <Workspace>
          <Toolbox>
            <ToolboxCell>
              <Glyph name="arrow" size={12} />
            </ToolboxCell>
            <ToolboxCell>
              <Glyph name="marquee" size={13} />
            </ToolboxCell>
            <ToolboxHeader>Design</ToolboxHeader>
            {LEFT_TOOLS_A.map((g) => (
              <ToolboxCell key={g} $active={g === "door"}>
                <Glyph name={g} size={14} />
              </ToolboxCell>
            ))}
            <ToolboxHeader>Viewpoi</ToolboxHeader>
            <ToolboxHeader>Docume</ToolboxHeader>
            {LEFT_TOOLS_B.map((g) => (
              <ToolboxCell key={g}>
                <Glyph name={g} size={14} tone="light" />
              </ToolboxCell>
            ))}
          </Toolbox>
          <CanvasColumn>
            <TabBar>
              <Tab $width={19} $tone="#eeeeee" $divider>
                <Glyph name="tileGrid" size={12} tone="mid" />
              </Tab>
              <Tab $width={174} $tone="#e2e2e2">
                <Glyph name="folder" size={12} tone="mid" />
                [1. Obergeschoss]
              </Tab>
              <Tab $width={173} $tone="#ffffff">
                <Glyph name="sheets" size={10} tone="mid" />
                [3D / All]
              </Tab>
              <Tab $width={173} $tone="#e2e2e2" $divider>
                <Glyph name="zone" size={10} tone="mid" />
                [Action Center]
              </Tab>
              <Tab $width={162} $tone="#e2e2e2" />
              <Tab $width={24} $tone="#eeeeee">
                <Glyph name="mapSmall" size={11} tone="mid" />
              </Tab>
            </TabBar>
            <Canvas>
              <WallDrawing />
              <Grip $side="top">
                <GripDash $vertical={false} />
              </Grip>
              <Grip $side="bottom">
                <GripDash $vertical={false} />
              </Grip>
              <Grip $side="left">
                <GripDash $vertical />
              </Grip>
              <Grip $side="right">
                <GripDash $vertical />
              </Grip>
            </Canvas>
            <NavBar>
              <NavSegment $width={41} $pad={0} $gap={3}>
                <Glyph name="navZoom" size={11} />
                <Glyph name="navZoomR" size={11} tone="light" />
                <Glyph name="navFit" size={11} />
              </NavSegment>
              <NavSegment $width={29} $gap={2}>
                <Glyph name="orbit" size={11} />
                <Glyph name="walk" size={11} />
              </NavSegment>
              <NavSegment $width={58}>
                <Glyph name="wheel" size={11} />
                <NavText $muted>N/A</NavText>
              </NavSegment>
              <NavSegment $width={63}>
                <Glyph name="rotate" size={11} tone="light" />
                <NavText $muted>N/A</NavText>
              </NavSegment>
              {NAV_SEGMENTS.map((s) => (
                <NavSegment key={s.text} $width={s.w}>
                  <Glyph name={s.icon} size={10} />
                  <NavText>{s.text}</NavText>
                </NavSegment>
              ))}
              <NavSegment $width={56} $last>
                <Glyph name="shade" size={10} />
                <NavText>Schattier...</NavText>
              </NavSegment>
            </NavBar>
          </CanvasColumn>
        </Workspace>
      </WorkArea>
      <SidePanels>
        <Columns>
          <NavigatorPanel>
            <IconRow>
              <ModeButton>
                <Glyph name="mapSmall" size={13} />
              </ModeButton>
              <RowSep />
              <ModeButton $active>
                <Glyph name="viewMap" size={13} />
              </ModeButton>
              <ModeButton>
                <Glyph name="layoutBook" size={13} />
              </ModeButton>
              <ModeButton>
                <Glyph name="drawings" size={13} />
              </ModeButton>
              <BurgerButton>
                <Glyph name="burger" size={9} />
              </BurgerButton>
            </IconRow>
            <SearchField $margin="0 3px 0 2px">
              <Glyph name="search" size={9} />
              Search View Map
            </SearchField>
            <TreeFrame $height={201} $margin="2px 2px 0 0">
              <Tree>
                <TreeRow depth={0} open icon="project" tone="blue" label="HS24_CAD Grundlage_Situati" />
                <TreeRow depth={1} open icon="folder" label="00 Situation" />
                <TreeRow depth={2} icon="folder" tone="blue" label="-2. Situation" />
                <TreeRow depth={1} open icon="folder" label="02 Grundrisse" />
                <TreeRow depth={2} open icon="pinFolder" tone="blue" label="Stories" />
                <TreeRow depth={3} icon="folder" tone="blue" label="3. Referenz" />
                <TreeRow depth={3} icon="folder" tone="blue" label="2. Obergeschoss" />
                <TreeRow depth={3} icon="folder" tone="blue" label="1. Obergeschoss" />
                <TreeRow depth={3} icon="folder" tone="blue" label="0. Erdgeschoss" />
                <TreeRow depth={3} icon="folder" tone="blue" label="-1. Untergeschoss" />
                <TreeRow depth={3} icon="folder" tone="blue" label="-2. Situation" />
                <TreeRow depth={1} open icon="folder" label="03 Schnitte" />
                <TreeRow depth={2} open icon="folderSection" tone="blue" label="Sections" />
                <TreeRow depth={3} icon="folderSection" tone="blue" label="S/02 Schnitt" />
                <TreeRow depth={3} icon="folderSection" tone="blue" label="S/03 Schnitt" />
              </Tree>
              <ScrollGutter>
                <ScrollThumbV />
              </ScrollGutter>
            </TreeFrame>
            <ScrollTrackH $margin="2px 0 0 2px">
              <ScrollThumbH $width={80} />
            </ScrollTrackH>
            <WideButton>Add Shortcut &gt;&gt;&gt;</WideButton>
            <SectionHeader $margin="5px 2px 0 2px">
              <Glyph name="triangleDown" size={6} tone="light" />
              View Properties
            </SectionHeader>
            <NoSelection>No Selection.</NoSelection>
          </NavigatorPanel>
          <OrganizerPanel>
            <IconRow>
              <ModeButton>
                <Glyph name="viewMap" size={13} />
              </ModeButton>
              <ModeButton>
                <Glyph name="layoutBook" size={13} />
              </ModeButton>
              <ModeButton $active>
                <Glyph name="drawings" size={13} />
              </ModeButton>
            </IconRow>
            <ServerRow>
              <BackButton>
                <Glyph name="back" size={9} />
              </BackButton>
              <ServerSelect>
                <Glyph name="drawings" size={10} />
                Server
              </ServerSelect>
            </ServerRow>
            <SearchField $margin="1px 2px 0 1px">
              <Glyph name="search" size={9} />
              Search "Server"
            </SearchField>
            <TreeFrame $height={321} $margin="2px 0 0 1px">
              <Tree>
                <TreeRow depth={0} open icon="pinFolder" label="HS24_CAD Grundlage_Situations" />
                <TreeRow depth={1} open icon="pinFolder" label="00 Situationsplan" />
                <TreeRow depth={2} icon="pdf" tone="mid" label="01 Vorlage Situationsplan" />
                <TreeRow depth={1} open={false} icon="pinFolder" label="02 Grundrisse" />
                <TreeRow depth={1} open={false} icon="pinFolder" label="03 Schnitte" />
                <TreeRow depth={1} open={false} icon="pinFolder" label="04 Ansichten" />
              </Tree>
            </TreeFrame>
            <ScrollTrackH $margin="2px 0 0 2px">
              <ScrollThumbH $width={93} />
            </ScrollTrackH>
            <ActionIcons>
              <Glyph name="newFolder" size={13} />
              <Glyph name="close" size={10} tone="red" />
            </ActionIcons>
            <SectionHeader $margin="0 1px 1px 1px">
              <Glyph name="triangle" size={6} tone="light" />
              Properties
            </SectionHeader>
            <SectionHeader $margin="0 1px 0 1px">
              <Glyph name="triangle" size={6} tone="light" />
              Format
            </SectionHeader>
          </OrganizerPanel>
        </Columns>
        <PublishRow>
          <PublishButton>Publish</PublishButton>
          <ItemsSelect>
            <Glyph name="overlay" size={9} />
            selected items
            <Stepper>⇕</Stepper>
          </ItemsSelect>
        </PublishRow>
        <PanelGrip />
        <OverrideRow>
          <SquareButton>
            <Glyph name="sheets" size={12} tone="light" />
          </SquareButton>
          <FieldBox>
            <Glyph name="folder" size={12} tone="light" />
            0. Erdgeschoss
          </FieldBox>
        </OverrideRow>
        <IconStrip $height={22} $pad={5} $border="bottom">
          <StripIcon $gap={0}>
            <Glyph name="outlineSelect" size={11} tone="light" />
          </StripIcon>
          <StripIcon $gap={24}>
            <Glyph name="moveSel" size={11} tone="blue" />
          </StripIcon>
          <StripIcon $gap={6}>
            <Glyph name="rotateSel" size={11} tone="blue" />
          </StripIcon>
          <StripIcon $gap={6}>
            <Glyph name="outlineSelect" size={11} tone="blue" />
          </StripIcon>
          <StripIcon $gap={6}>
            <Glyph name="sync" size={11} tone="light" />
          </StripIcon>
        </IconStrip>
        <TransLabel $top={4}>Reference:</TransLabel>
        <SliderRow $top={2}>
          <SquareButton>
            <Swatch />
          </SquareButton>
          <SliderTrack>
            {TICKS.map((t) => (
              <SliderTick key={t} />
            ))}
          </SliderTrack>
          <SliderKnob />
          <EndCap />
        </SliderRow>
        <TransLabel $top={1}>Active:</TransLabel>
        <SliderRow $top={3} $bottom={3}>
          <SquareButton>
            <Pie />
          </SquareButton>
          <SliderTrack>
            {TICKS.map((t) => (
              <SliderTick key={t} />
            ))}
          </SliderTrack>
          <SliderKnob />
        </SliderRow>
        <IconStrip $height={24} $pad={23} $border="top">
          <StripIcon $gap={0}>
            <Glyph name="handSel" size={12} tone="blue" />
          </StripIcon>
          <StripIcon $gap={6}>
            <Glyph name="check2" size={11} tone="blue" />
          </StripIcon>
          <StripIcon $gap={6}>
            <Glyph name="splitSel" size={11} tone="light" />
          </StripIcon>
          <StripIcon $gap={6}>
            <Glyph name="eyeSel" size={11} tone="light" />
          </StripIcon>
        </IconStrip>
      </SidePanels>
    </Body>
    <StatusBar>
      <StatusText>Click on a Wall to Place Door Centerpoint.</StatusText>
      <Brand>
        <Glyph name="windowStack" size={11} />
        <BrandDivider />
        <BrandName>
          GRAPHISOFT <BrandId>ID</BrandId>
        </BrandName>
      </Brand>
    </StatusBar>
  </Page>
);

export default App;
